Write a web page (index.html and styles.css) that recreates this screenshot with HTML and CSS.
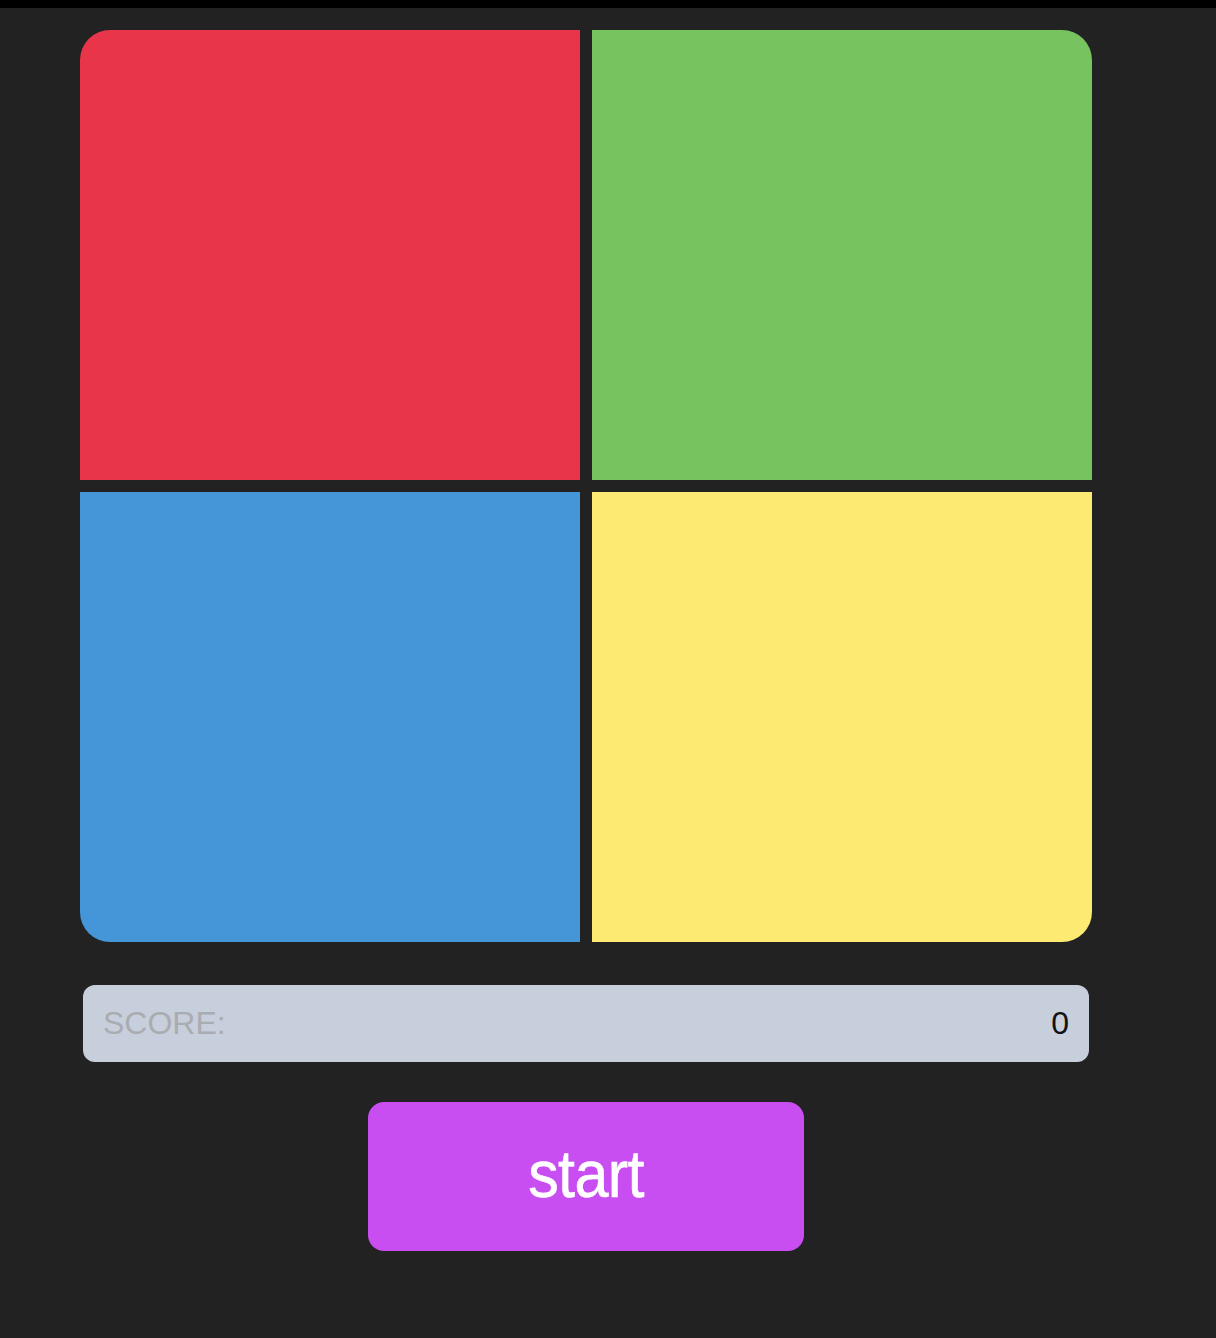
FILE: index.html
```html
<!DOCTYPE html>
<html>
<head>
<meta charset="utf-8">
<link rel="stylesheet" href="styles.css">
</head>
<body>
<div class="topbar"></div>
<main class="game">
  <div class="board">
    <div class="pad pad-red"></div>
    <div class="pad pad-green"></div>
    <div class="pad pad-blue"></div>
    <div class="pad pad-yellow"></div>
  </div>
  <div class="score">
    <span class="score-label">SCORE:</span>
    <span class="score-value">0</span>
  </div>
  <div class="actions">
    <button class="start-btn"><span class="start-text">start</span></button>
  </div>
</main>
</body>
</html>
```
FILE: styles.css
```css
html, body {
  margin: 0;
  padding: 0;
  background: #222222;
  height: 100%;
}
body {
  font-family: "Liberation Sans", Arial, sans-serif;
}
.topbar {
  height: 8px;
  background: #000;
}
.game {
  width: 1012px;
  margin-left: 80px;
  padding-top: 22px;
}
.board {
  display: grid;
  grid-template-columns: 500px 500px;
  grid-template-rows: 450px 450px;
  gap: 12px;
  border-radius: 30px;
  overflow: hidden;
}
.pad-red { background: #e83549; }
.pad-green { background: #77c360; }
.pad-blue { background: #4496d8; }
.pad-yellow { background: #fcea73; }
.score {
  margin: 43px 3px 0;
  height: 77px;
  background: #c8cfdc;
  border-radius: 12px;
  display: flex;
  align-items: center;
  justify-content: space-between;
  padding: 0 20px;
  font-size: 32px;
}
.score-label { color: #a9acb0; }
.score-value { color: #111; }
.actions {
  display: flex;
  justify-content: center;
  margin-top: 40px;
}
.start-btn {
  width: 436px;
  height: 149px;
  border: none;
  border-radius: 16px;
  background: #c84ef2;
  color: #fff;
  font-family: "Liberation Sans", Arial, sans-serif;
  font-size: 61px;
  letter-spacing: -0.6px;
  padding: 0;
}
.start-text {
  display: inline-block;
  transform: translateY(-3px) scaleY(1.08);
  -webkit-text-stroke: 0.6px #fff;
}
```
